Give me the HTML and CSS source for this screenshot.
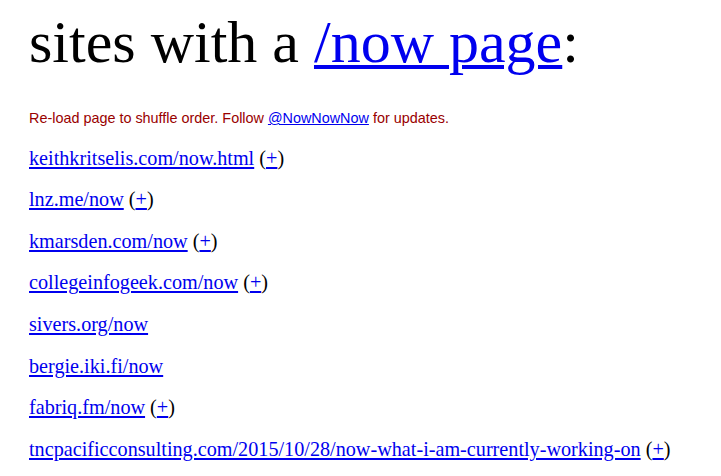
FILE: index.html
```html
<!DOCTYPE html>
<html>
<head>
<meta charset="utf-8">
<title>now</title>
<link rel="stylesheet" href="styles.css">
</head>
<body>
<main class="page">
  <h1 class="title">sites with a <a class="title-link" href="#">/now page</a>:</h1>
  <p class="note">Re-load page to shuffle order. Follow <a href="#">@NowNowNow</a> for updates.</p>
  <ul class="sites">
    <li><a href="#">keithkritselis.com/now.html</a> (<a href="#">+</a>)</li>
    <li><a href="#">lnz.me/now</a> (<a href="#">+</a>)</li>
    <li><a href="#">kmarsden.com/now</a> (<a href="#">+</a>)</li>
    <li><a href="#">collegeinfogeek.com/now</a> (<a href="#">+</a>)</li>
    <li><a href="#">sivers.org/now</a></li>
    <li><a href="#">bergie.iki.fi/now</a></li>
    <li><a href="#">fabriq.fm/now</a> (<a href="#">+</a>)</li>
    <li><a href="#">tncpacificconsulting.com/2015/10/28/now-what-i-am-currently-working-on</a> (<a href="#">+</a>)</li>
  </ul>
</main>
</body>
</html>
```

FILE: styles.css
```css
html, body {
  margin: 0;
  padding: 0;
  background: #fff;
}
body {
  font-family: "Liberation Serif", "Times New Roman", serif;
  color: #000;
}
a {
  color: #0000ee;
}
.page {
  padding: 0 0 0 29px;
  overflow: hidden;
}
.title {
  font-family: "Liberation Serif", serif;
  font-weight: normal;
  font-size: 60px;
  line-height: 70px;
  margin: 7px 0 0 0;
  white-space: nowrap;
}
.title-link {
  text-decoration-thickness: 4px;
  text-underline-offset: 3px;
}
.note {
  font-family: "Liberation Sans", Arial, sans-serif;
  font-size: 14.4px;
  line-height: 16px;
  color: #990000;
  margin: 33px 0 0 0;
}
.sites {
  list-style: none;
  margin: 0;
  padding: 2px 0 0 0;
  font-size: 20.2px;
  line-height: 24px;
  white-space: nowrap;
}
.sites li {
  margin-top: 17.6px;
}
```
